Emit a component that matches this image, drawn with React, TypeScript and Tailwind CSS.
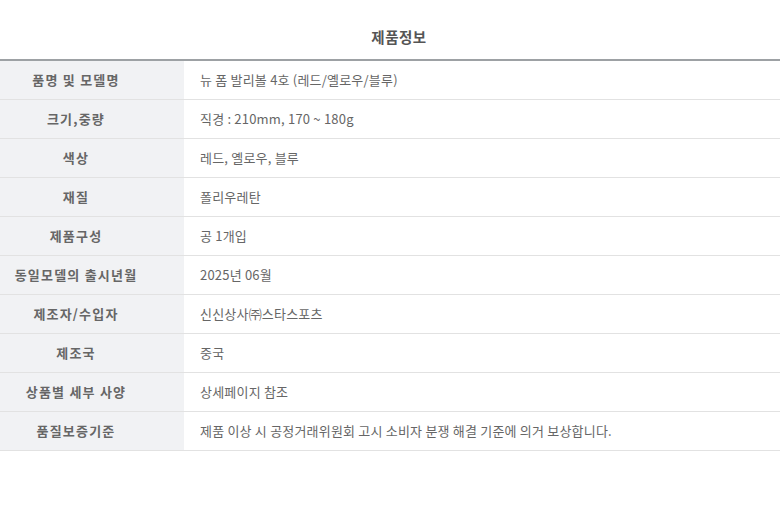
import React from "react";

const rows: [string, string][] = [
  ["품명 및 모델명", "뉴 폼 발리볼 4호 (레드/옐로우/블루)"],
  ["크기,중량", "직경 : 210mm, 170 ~ 180g"],
  ["색상", "레드, 옐로우, 블루"],
  ["재질", "폴리우레탄"],
  ["제품구성", "공 1개입"],
  ["동일모델의 출시년월", "2025년 06월"],
  ["제조자/수입자", "신신상사㈜스타스포츠"],
  ["제조국", "중국"],
  ["상품별 세부 사양", "상세페이지 참조"],
  ["품질보증기준", "제품 이상 시 공정거래위원회 고시 소비자 분쟁 해결 기준에 의거 보상합니다."],
];

export default function App() {
  return (
    <div
      className="w-[780px] h-[514px] bg-white"
      style={{ fontFamily: '"Noto Sans CJK KR", "Noto Sans", sans-serif' }}
    >
      <div className="pt-[28px] pb-[14px] pl-[18px] text-center text-[14.5px] leading-[17px] font-bold text-[#555] tracking-[0.5px]">
        제품정보
      </div>
      <div className="border-t-2 border-[#9da1a4]">
        {rows.map(([k, v]) => (
          <div key={k} className="flex h-[39px] border-b border-[#e2e2e2]">
            <div className="w-[184px] pr-[32px] bg-[#f1f2f4] flex items-center justify-center text-[13px] font-bold text-[#666] tracking-[1.2px]">
              {k}
            </div>
            <div className="flex-1 flex items-center pl-[16px] text-[13px] text-[#666] tracking-[0.2px]">
              {v}
            </div>
          </div>
        ))}
      </div>
    </div>
  );
}
